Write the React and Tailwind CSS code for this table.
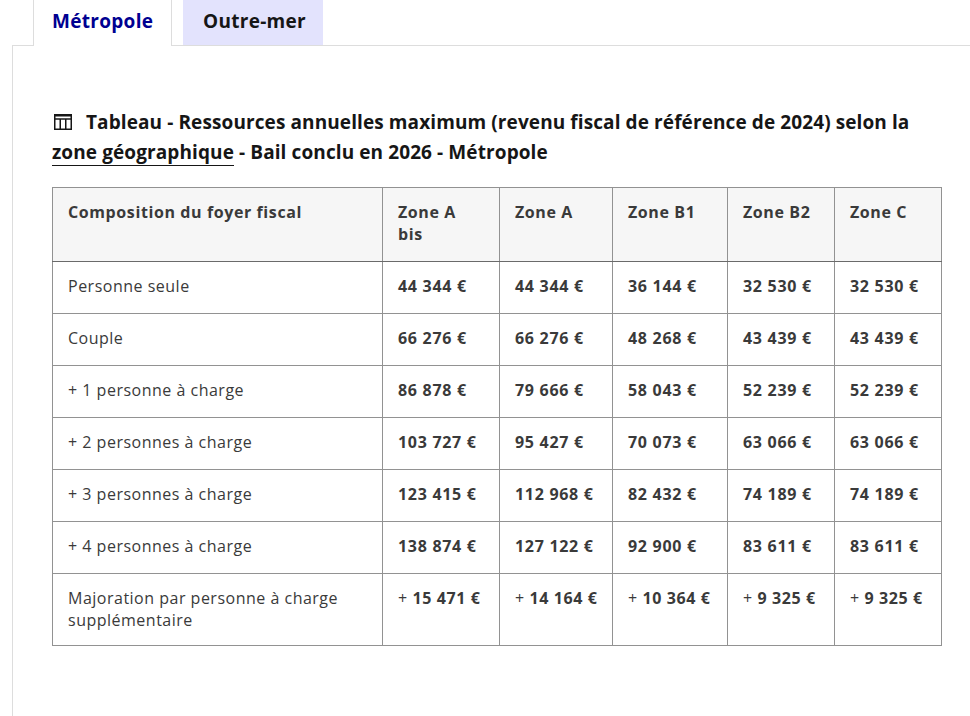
import React from "react";

const rows = [
  ["Personne seule", "44 344 €", "44 344 €", "36 144 €", "32 530 €", "32 530 €"],
  ["Couple", "66 276 €", "66 276 €", "48 268 €", "43 439 €", "43 439 €"],
  ["+ 1 personne à charge", "86 878 €", "79 666 €", "58 043 €", "52 239 €", "52 239 €"],
  ["+ 2 personnes à charge", "103 727 €", "95 427 €", "70 073 €", "63 066 €", "63 066 €"],
  ["+ 3 personnes à charge", "123 415 €", "112 968 €", "82 432 €", "74 189 €", "74 189 €"],
  ["+ 4 personnes à charge", "138 874 €", "127 122 €", "92 900 €", "83 611 €", "83 611 €"],
];

const widths = ["w-[330px]", "w-[117px]", "w-[113px]", "w-[115px]", "w-[107px]", "w-[107px]"];

function TableIcon() {
  return (
    <svg width="18" height="16" viewBox="0 0 18 16" className="inline-block ml-[2px] mr-[14px] -mt-[3px] align-middle">
      <rect x="0.75" y="0.75" width="16.5" height="14.5" fill="none" stroke="#161616" strokeWidth="1.5" />
      <rect x="0" y="0" width="18" height="2.5" fill="#161616" />
      <line x1="0" y1="5" x2="18" y2="5" stroke="#161616" strokeWidth="1.5" />
      <line x1="6.25" y1="5" x2="6.25" y2="15" stroke="#161616" strokeWidth="1.5" />
      <line x1="11.75" y1="5" x2="11.75" y2="15" stroke="#161616" strokeWidth="1.5" />
    </svg>
  );
}

export default function App() {
  return (
    <div className="bg-white min-h-[716px] w-[970px] overflow-hidden text-[#161616]" style={{ fontFamily: "'Open Sans', 'Noto Sans', sans-serif" }}>
      <div className="flex h-[46px] pl-[12px]">
        <div className="w-[21px] border-b border-[#dddddd]" />
        <div className="w-[139px] border-l border-r border-[#dddddd] flex items-center pb-[3px] pl-[18px] text-[19px] font-bold text-[#000091] tracking-[0.3px]">
          Métropole
        </div>
        <div className="w-[11px] border-b border-[#dddddd]" />
        <div className="w-[140px] bg-[#e3e3fd] border-b border-[#dddddd] flex items-center pb-[3px] pl-[20px] text-[19px] font-bold text-[#161616] tracking-[0.3px]">
          Outre-mer
        </div>
        <div className="flex-1 border-b border-[#dddddd]" />
      </div>
      <div className="ml-[12px] border-l border-[#dddddd] pl-[39px] pt-[61px] pb-[70px]">
        <div className="text-[19px] font-bold leading-[30px] w-[895px] text-[#161616] tracking-[0.1px]">
          <TableIcon />
          Tableau - Ressources annuelles maximum (revenu fiscal de référence de 2024) selon la{" "}
          <span className="underline underline-offset-[6px] decoration-1">zone géographique</span> - Bail conclu en 2026 - Métropole
        </div>
        <table className="mt-[20px] table-fixed w-[890px] border-collapse text-[16px] leading-[22px] text-[#3a3a3a] tracking-[0.5px]">
          <colgroup>
            {widths.map((w, i) => (
              <col key={i} className={w} />
            ))}
          </colgroup>
          <thead>
            <tr className="bg-[#f6f6f6]">
              {["Composition du foyer fiscal", "Zone A bis", "Zone A", "Zone B1", "Zone B2", "Zone C"].map((h, i) => (
                <th
                  key={i}
                  className={`border border-[#929292] border-b-[#6a6a6a] text-left align-top font-bold tracking-[0.6px] px-[15px] pt-[13px] pb-[16px] ${i === 1 ? "pr-[30px]" : ""}`}
                >
                  {h}
                </th>
              ))}
            </tr>
          </thead>
          <tbody>
            {rows.map((r, ri) => (
              <tr key={ri}>
                {r.map((c, ci) => (
                  <td
                    key={ci}
                    className={`border border-[#929292] align-top px-[15px] pt-[13px] pb-[16px] whitespace-nowrap ${ci > 0 ? "font-bold tracking-[0.7px]" : ""}`}
                  >
                    {c}
                  </td>
                ))}
              </tr>
            ))}
            <tr>
              <td className="border border-[#929292] align-top px-[15px] pt-[13px] pb-[14px]">
                Majoration par personne à charge supplémentaire
              </td>
              {["15 471 €", "14 164 €", "10 364 €", "9 325 €", "9 325 €"].map((c, ci) => (
                <td key={ci} className="border border-[#929292] align-top px-[15px] pt-[13px] pb-[14px] whitespace-nowrap tracking-[0.6px]">
                  <span className="font-normal">+ </span>
                  <span className="font-bold">{c}</span>
                </td>
              ))}
            </tr>
          </tbody>
        </table>
      </div>
    </div>
  );
}
